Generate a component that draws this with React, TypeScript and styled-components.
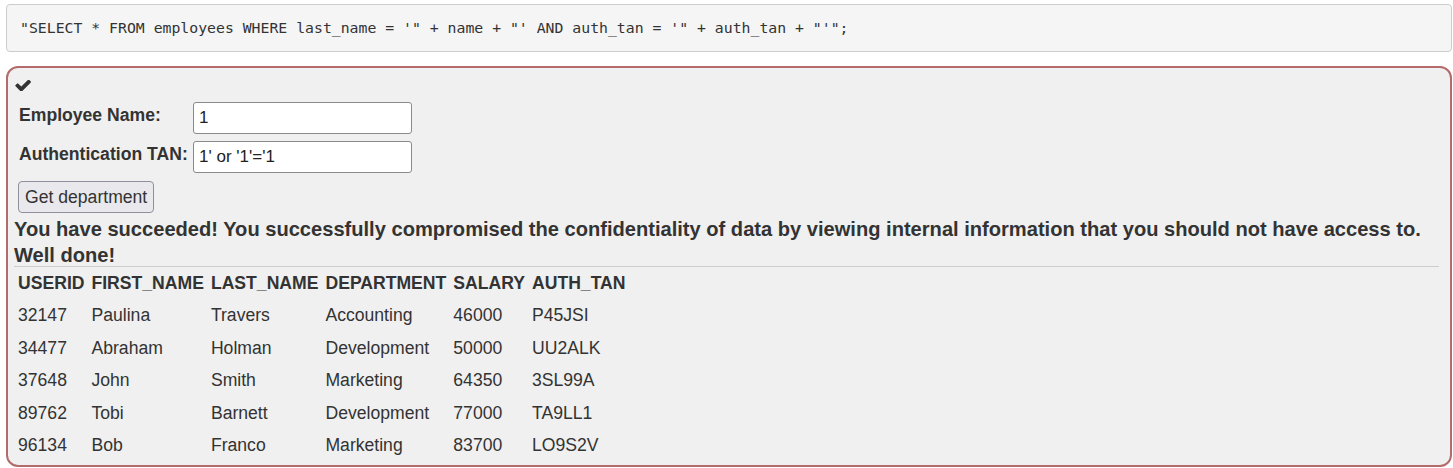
import React from 'react'
import styled, { createGlobalStyle } from 'styled-components'

const GlobalStyle = createGlobalStyle`
  body {
    margin: 0;
    background: #fff;
    color: #333;
    font-family: "Liberation Sans", Arial, sans-serif;
    font-size: 17.6px;
  }
`

const Page = styled.div`
  padding: 4px 1px 0 6px;
`

const CodeBlock = styled.pre`
  margin: 0;
  padding: 13px 13px;
  background: #f5f5f5;
  border: 1px solid #ccc;
  border-radius: 4px;
  font-family: "DejaVu Sans Mono", "Liberation Mono", monospace;
  font-size: 14.8px;
  line-height: 20px;
  color: #333;
  white-space: pre;
  overflow: hidden;
`

const Panel = styled.div`
  margin-top: 14px;
  border: 2px solid #b36b6b;
  border-radius: 12px;
  background: #f0f0f0;
  padding: 12px 6px 3px 6px;
`

const IconRow = styled.div`
  display: flex;
  align-items: center;
  height: 11px;
  padding-left: 1px;
  color: #333;
`

const CheckIcon = () => (
  <svg width="16" height="11" viewBox="90 420 1590 980" fill="currentColor">
    <path d="M1671 566q0 40-28 68l-724 724-136 136q-28 28-68 28t-68-28l-136-136-362-362q-28-28-28-68t28-68l136-136q28-28 68-28t68 28l294 295 656-657q28-28 68-28t68 28l136 136q28 28 28 68z" />
  </svg>
)

const Form = styled.div`
  display: grid;
  grid-template-columns: 174px 219px;
  row-gap: 7px;
  margin-top: 11px;
  padding-left: 5px;
`

const Label = styled.label`
  font-weight: bold;
  font-size: 17.6px;
  line-height: 20px;
  padding-top: 3px;
`

const TextInput = styled.input`
  box-sizing: border-box;
  width: 219px;
  height: 32px;
  margin: 0;
  padding: 2px 5px;
  border: 1px solid #8a8a8a;
  border-radius: 3px;
  background: #fff;
  font-family: "Liberation Sans", Arial, sans-serif;
  font-size: 17px;
  color: #222;
`

const Button = styled.button`
  margin: 8px 0 0 4px;
  height: 32px;
  padding: 0 6px;
  background: #e9e9ed;
  border: 1px solid #8f8f9d;
  border-radius: 4px;
  font-family: "Liberation Sans", Arial, sans-serif;
  font-size: 17.6px;
  color: #333;
`

const Feedback = styled.div`
  margin-top: 3px;
  font-weight: bold;
  font-size: 20.1px;
  line-height: 26px;
  color: #333;
`

const Rule = styled.hr`
  margin: -2px 5px 0 0;
  border: none;
  border-top: 1px solid #ccc;
`

const Table = styled.table`
  margin-left: 4px;
  border-collapse: collapse;
  font-size: 17.6px;
  color: #333;
`

const Cell = styled.td<{ $head?: boolean }>`
  height: 32.5px;
  padding: 0 7px 0 0;
  font-weight: ${(p) => (p.$head ? 'bold' : 'normal')};
  vertical-align: middle;
  white-space: nowrap;
`

const columns = ['USERID', 'FIRST_NAME', 'LAST_NAME', 'DEPARTMENT', 'SALARY', 'AUTH_TAN']

const rows = [
  ['32147', 'Paulina', 'Travers', 'Accounting', '46000', 'P45JSI'],
  ['34477', 'Abraham', 'Holman', 'Development', '50000', 'UU2ALK'],
  ['37648', 'John', 'Smith', 'Marketing', '64350', '3SL99A'],
  ['89762', 'Tobi', 'Barnett', 'Development', '77000', 'TA9LL1'],
  ['96134', 'Bob', 'Franco', 'Marketing', '83700', 'LO9S2V'],
]

export default function App() {
  return (
    <Page>
      <GlobalStyle />
      <CodeBlock>
        {`"SELECT * FROM employees WHERE last_name = '" + name + "' AND auth_tan = '" + auth_tan + "'";`}
      </CodeBlock>
      <Panel>
        <IconRow>
          <CheckIcon />
        </IconRow>
        <Form>
          <Label>Employee Name:</Label>
          <TextInput defaultValue="1" />
          <Label>Authentication TAN:</Label>
          <TextInput defaultValue="1' or '1'='1" />
        </Form>
        <Button>Get department</Button>
        <Feedback>
          You have succeeded! You successfully compromised the confidentiality of data by viewing
          internal information that you should not have access to.
          <br />
          Well done!
        </Feedback>
        <Rule />
        <Table>
          <tbody>
            <tr>
              {columns.map((c) => (
                <Cell key={c} $head>
                  {c}
                </Cell>
              ))}
            </tr>
            {rows.map((r) => (
              <tr key={r[0]}>
                {r.map((v, i) => (
                  <Cell key={i}>{v}</Cell>
                ))}
              </tr>
            ))}
          </tbody>
        </Table>
      </Panel>
    </Page>
  )
}
